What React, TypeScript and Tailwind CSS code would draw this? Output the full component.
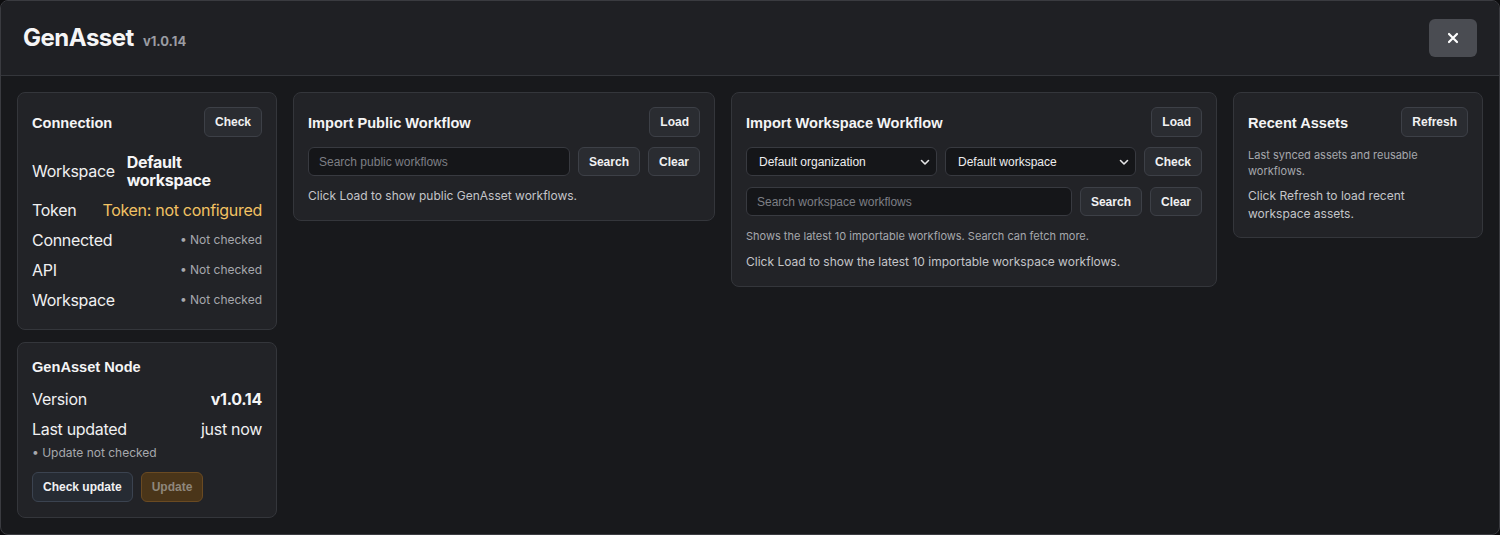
import React from "react";

const btnBase =
  "h-[30px] px-[10px] rounded-[6px] border text-[12px] font-bold [font-family:'Liberation_Sans',Arial,sans-serif] leading-none flex items-center justify-center shrink-0";
const btn = btnBase + " border-[#3d4047] bg-[#2a2c31] text-[#f1f1f2]";
const btnSm =
  "h-[29px] px-[10px] rounded-[6px] border border-[#3d4047] bg-[#2a2c31] text-[#f1f1f2] text-[12px] font-bold [font-family:'Liberation_Sans',Arial,sans-serif] leading-none flex items-center justify-center shrink-0";
const card = "rounded-[8px] border border-[#34363b] bg-[#222327] px-[14px]";
const title =
  "text-[14.6px] font-bold text-[#f4f4f5] [font-family:'Liberation_Sans',Arial,sans-serif]";
const input =
  "h-[29px] rounded-[6px] border border-[#383a40] bg-[#151619] px-[10px] text-[12px] text-[#d0d0d2] placeholder:text-[#7d7f85] [font-family:'Liberation_Sans',Arial,sans-serif] outline-none min-w-0";
const label = "text-[16px] tracking-[-0.3px] text-[#f0f0f1] shrink-0";

function Chevron() {
  return (
    <svg width="12" height="12" viewBox="0 0 12 12" fill="none">
      <path d="M2.5 4.5 6 8l3.5-3.5" stroke="#e5e5e7" strokeWidth="1.6" strokeLinecap="round" strokeLinejoin="round" />
    </svg>
  );
}

function Select({ text }: { text: string }) {
  return (
    <div className="h-[29px] flex-1 rounded-[6px] border border-[#383a40] bg-[#151619] pl-[12px] pr-[5px] flex items-center justify-between text-[12px] text-[#eeeef0] [font-family:'Liberation_Sans',Arial,sans-serif] min-w-0">
      <span>{text}</span>
      <Chevron />
    </div>
  );
}

function Row({ name, children }: { name: string; children: React.ReactNode }) {
  return (
    <div className="flex items-center justify-between gap-3 min-h-[24px]">
      <span className={label}>{name}</span>
      {children}
    </div>
  );
}

const notChecked = <span className="text-[12px] text-[#a6a8ad]">• Not checked</span>;

function CardHead({ name, action }: { name: string; action: string }) {
  return (
    <div className="flex items-center justify-between">
      <span className={title + " pt-[3px]"}>{name}</span>
      <button className={btn}>{action}</button>
    </div>
  );
}

export default function App() {
  return (
    <div className="w-[1500px] h-[535px] bg-[#0d0d0f] [font-family:Inter,'Noto_Sans',sans-serif]">
      <div className="h-full rounded-[8px] border border-[#3a3b40] bg-[#18191c] overflow-hidden flex flex-col">
        <div className="h-[75px] shrink-0 bg-[#1f2024] border-b border-[#34363b] flex items-center justify-between pl-[22px] pr-[22px]">
          <div className="flex items-baseline gap-[9px]">
            <span className="text-[24px] font-bold text-[#f5f5f6] tracking-[-0.5px]">GenAsset</span>
            <span className="text-[13px] font-bold text-[#9a9ca2]">v1.0.14</span>
          </div>
          <button className="w-[48px] h-[38px] rounded-[6px] bg-[#4a4c52] flex items-center justify-center">
            <svg width="12" height="12" viewBox="0 0 12 12">
              <path d="M2 2l8 8M10 2l-8 8" stroke="#ffffff" strokeWidth="2.2" strokeLinecap="round" />
            </svg>
          </button>
        </div>
        <div className="p-[16px] grid grid-cols-[260px_422px_486px_250px] gap-[16px] items-start">
          <div className="flex flex-col gap-[12px]">
            <div className={card + " pt-[14px] pb-[17px]"}>
              <CardHead name="Connection" action="Check" />
              <div className="mt-[16px] flex flex-col gap-[6px]">
                <div className="flex items-center gap-3 mb-[3px]">
                  <span className={label}>Workspace</span>
                  <span className="text-[16px] tracking-[-0.3px] font-bold leading-[18px] text-[#f5f5f6]">
                    Default workspace
                  </span>
                </div>
                <Row name="Token">
                  <span className="text-[16px] tracking-[-0.3px] text-[#f2c263]">Token: not configured</span>
                </Row>
                <Row name="Connected">{notChecked}</Row>
                <Row name="API">{notChecked}</Row>
                <Row name="Workspace">{notChecked}</Row>
              </div>
            </div>
            <div className={card + " pt-[15px] pb-[15px]"}>
              <div className={title + " leading-[18px]"}>GenAsset Node</div>
              <div className="mt-[11px] flex flex-col gap-[6px]">
                <Row name="Version">
                  <span className="text-[16px] tracking-[-0.3px] font-bold text-[#f5f5f6]">v1.0.14</span>
                </Row>
                <Row name="Last updated">
                  <span className="text-[16px] tracking-[-0.3px] text-[#f0f0f1]">just now</span>
                </Row>
              </div>
              <div className="text-[12px] text-[#a6a8ad] mt-[3px]">• Update not checked</div>
              <div className="mt-[10px] flex gap-[8px]">
                <button className={btnBase + " bg-[#262b33] border-[#3b4350] text-[#f1f1f2]"}>Check update</button>
                <button className={btnBase + " bg-[#4a3519] border-[#6a4a22] text-[#8f877c]"}>Update</button>
              </div>
            </div>
          </div>

          <div className={card + " pt-[14px] pb-[15px]"}>
            <CardHead name="Import Public Workflow" action="Load" />
            <div className="mt-[10px] flex gap-[8px]">
              <input className={input + " flex-1"} placeholder="Search public workflows" />
              <button className={btnSm}>Search</button>
              <button className={btnSm}>Clear</button>
            </div>
            <div className="mt-[11px] text-[12px] text-[#c4c5c9] leading-[18px]">
              Click Load to show public GenAsset workflows.
            </div>
          </div>

          <div className={card + " pt-[14px] pb-[15px]"}>
            <CardHead name="Import Workspace Workflow" action="Load" />
            <div className="mt-[10px] flex gap-[8px]">
              <Select text="Default organization" />
              <Select text="Default workspace" />
              <button className={btnSm}>Check</button>
            </div>
            <div className="mt-[11px] flex gap-[8px]">
              <input className={input + " flex-1"} placeholder="Search workspace workflows" />
              <button className={btnSm}>Search</button>
              <button className={btnSm}>Clear</button>
            </div>
            <div className="mt-[12px] text-[11px] text-[#a6a8ad] leading-[16px]">
              Shows the latest 10 importable workflows. Search can fetch more.
            </div>
            <div className="mt-[9px] text-[12px] text-[#c4c5c9] leading-[18px]">
              Click Load to show the latest 10 importable workspace workflows.
            </div>
          </div>

          <div className={card + " pt-[14px] pb-[14px]"}>
            <CardHead name="Recent Assets" action="Refresh" />
            <div className="mt-[10px] text-[11px] text-[#a6a8ad] leading-[16px]">
              Last synced assets and reusable workflows.
            </div>
            <div className="mt-[8px] text-[12px] text-[#c4c5c9] leading-[18px]">
              Click Refresh to load recent workspace assets.
            </div>
          </div>
        </div>
      </div>
    </div>
  );
}
